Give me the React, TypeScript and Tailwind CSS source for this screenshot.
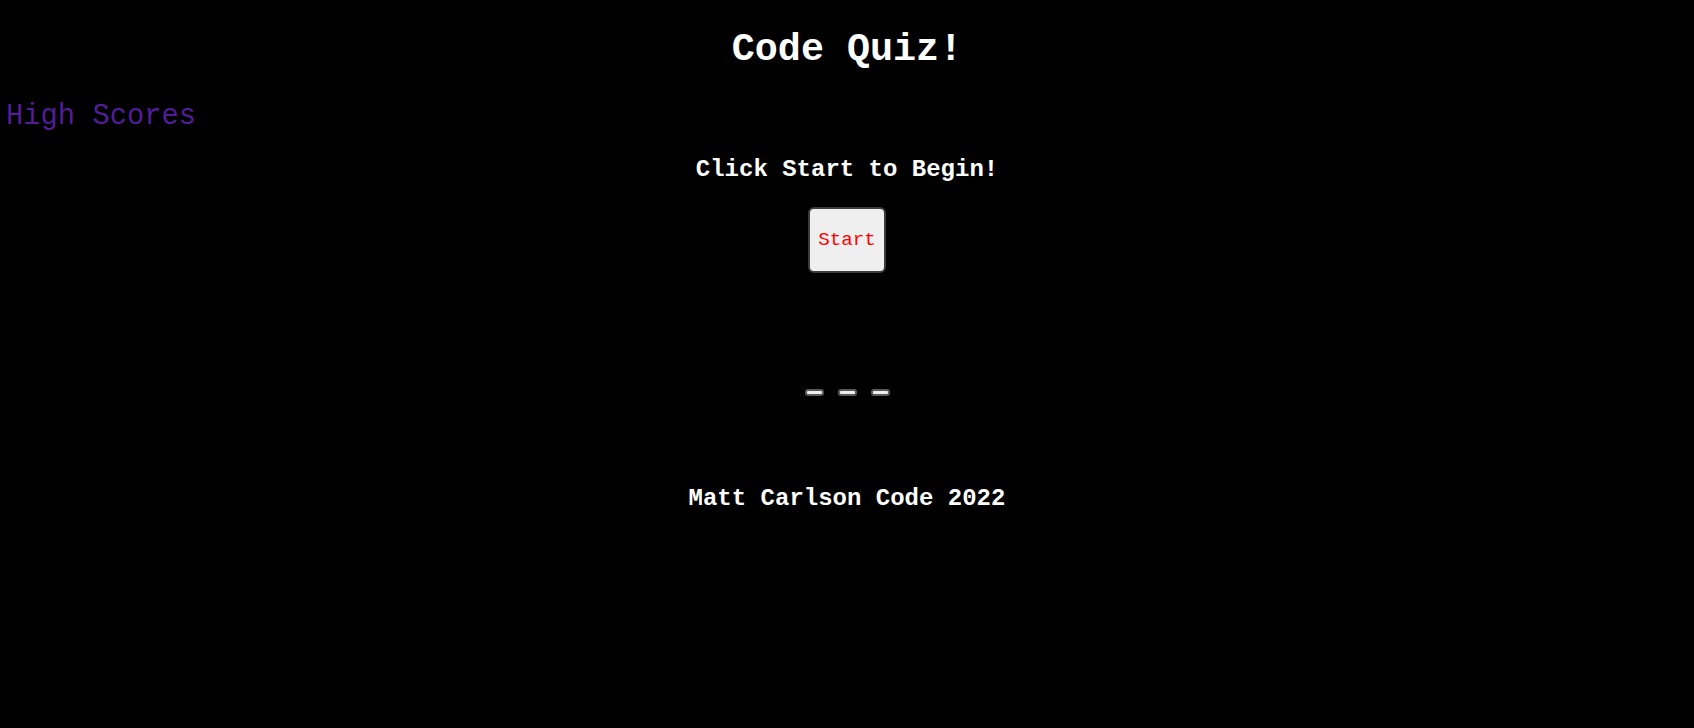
export default function App() {
  return (
    <div className="min-h-[728px] bg-black font-['Liberation_Mono','Courier_New',monospace] text-white">
      <header>
        <h1 className="pt-[28px] text-center text-[38.4px] leading-[44px] font-bold">Code Quiz!</h1>
        <a href="#" className="mt-[28px] block pl-[6px] text-[28.8px] leading-[33px] text-[#521d98]">
          High Scores
        </a>
      </header>

      <main className="flex flex-col items-center">
        <h3 className="mt-[23px] text-[24px] leading-[27px] font-bold">Click Start to Begin!</h3>
        <button className="mt-[24px] h-[66px] w-[78px] rounded-[6px] border-2 border-[#3c3c3c] bg-[#efefef] text-[19.2px] text-[#ff0000]">
          Start
        </button>

        {/* answer buttons, empty until the quiz starts */}
        <div className="mt-[116px] flex gap-[14px]">
          <button className="h-[7px] w-[19px] rounded-[3px] border-2 border-[#5a5a5a] bg-[#efefef]" />
          <button className="h-[7px] w-[19px] rounded-[3px] border-2 border-[#5a5a5a] bg-[#efefef]" />
          <button className="h-[7px] w-[19px] rounded-[3px] border-2 border-[#5a5a5a] bg-[#efefef]" />
        </div>
      </main>

      <footer className="mt-[89px] text-center text-[24px] leading-[27px] font-bold">Matt Carlson Code 2022</footer>
    </div>
  );
}
